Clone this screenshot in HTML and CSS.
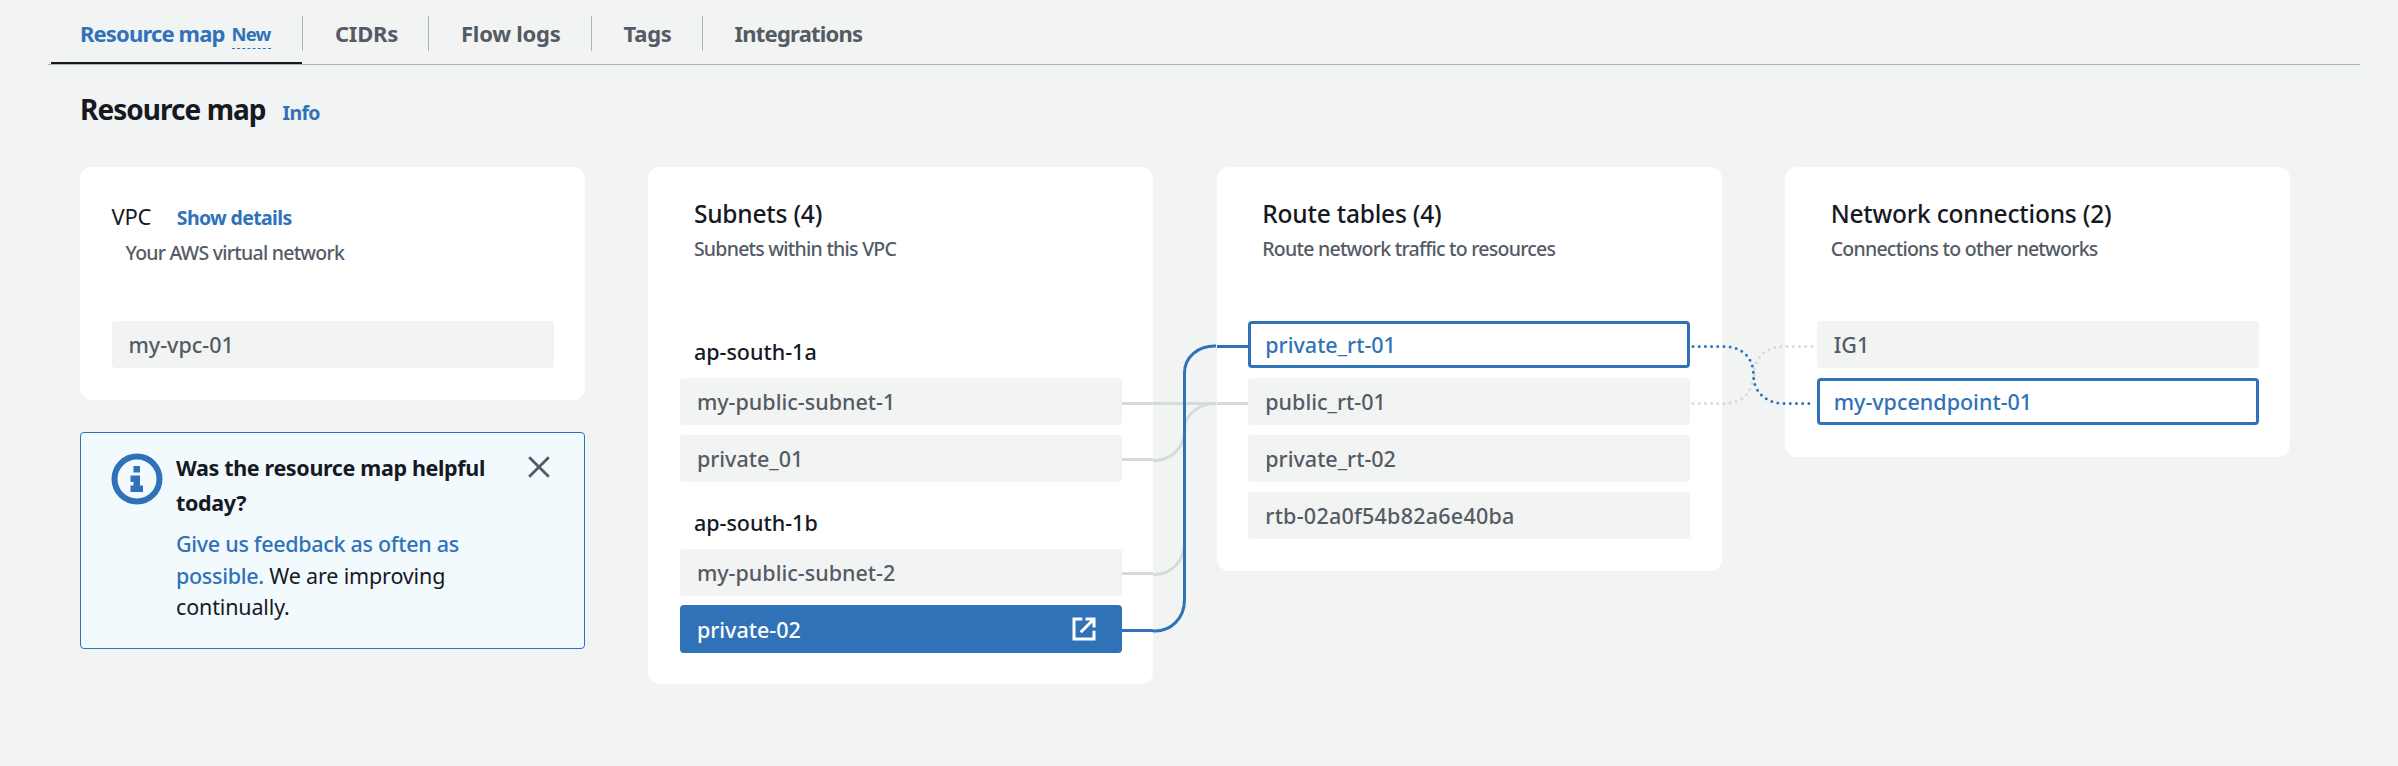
FILE: index.html
```html
<!DOCTYPE html>
<html lang="en">
<head>
<meta charset="utf-8">
<title>Resource map</title>
<link rel="stylesheet" href="styles.css">
</head>
<body>
<nav class="tabs">
  <a class="tab tab-active"><span>Resource map</span><span class="tag-new">New</span></a>
  <a class="tab">CIDRs</a>
  <a class="tab">Flow logs</a>
  <a class="tab">Tags</a>
  <a class="tab">Integrations</a>
</nav>
<header class="page-head">
  <h1>Resource map</h1>
  <a class="info">Info</a>
</header>
<main class="map">
  <div class="column">
    <section class="card">
      <div class="card-head card-head-vpc">
        <h2>VPC <a class="details">Show details</a></h2>
        <p>Your AWS virtual network</p>
      </div>
      <div class="node">my-vpc-01</div>
    </section>
    <aside class="feedback">
      <svg class="feedback-icon" width="52" height="52" viewBox="0 0 52 52">
        <circle cx="26" cy="26" r="22.5" fill="none" stroke="#3072b8" stroke-width="6"/>
        <path fill="#3072b8" d="M22.500 13h6.500v6.500h-6.500zM19.500 22.500h9.500v10h3v6.500h-12.500v-6.500h3v-3.500h-3z"/>
      </svg>
      <div class="feedback-text">
        <h3>Was the resource map helpful<br>today?</h3>
        <p><a>Give us feedback as often as<br>possible.</a> We are improving<br>continually.</p>
      </div>
      <svg class="close" width="22" height="22" viewBox="0 0 22 22"><path d="M1.2 1.2l19.6 19.6M20.8 1.2L1.2 20.8" stroke="#545b64" stroke-width="2.8"/></svg>
    </aside>
  </div>
  <section class="card">
    <div class="card-head">
      <h2>Subnets (4)</h2>
      <p>Subnets within this VPC</p>
    </div>
    <h3 class="zone">ap-south-1a</h3>
    <div class="node">my-public-subnet-1</div>
    <div class="node">private_01</div>
    <h3 class="zone">ap-south-1b</h3>
    <div class="node">my-public-subnet-2</div>
    <div class="node node-selected">private-02
      <svg width="24" height="24" viewBox="0 0 24 24" fill="none" stroke="#fff" stroke-width="3"><path d="M10.3 2H2v20h20v-8.300M13.500 2H22v8.500M22 2L8.700 15.300"/></svg>
    </div>
  </section>
  <section class="card">
    <div class="card-head">
      <h2>Route tables (4)</h2>
      <p>Route network traffic to resources</p>
    </div>
    <div class="node node-linked">private_rt-01</div>
    <div class="node">public_rt-01</div>
    <div class="node">private_rt-02</div>
    <div class="node node-id">rtb-02a0f54b82a6e40ba</div>
  </section>
  <section class="card">
    <div class="card-head">
      <h2>Network connections (2)</h2>
      <p>Connections to other networks</p>
    </div>
    <div class="node">IG1</div>
    <div class="node node-linked">my-vpcendpoint-01</div>
  </section>
  <svg class="links" width="2210" height="520" viewBox="80 167 2210 520" fill="none" stroke-width="3">
    <g stroke="#d5dbdb">
      <path d="M1122 403.500H1216M1217 403.500H1248"/>
      <path d="M1122 459.500H1153M1153 460.500C1171 461 1184.500 448 1184.500 430C1184.500 415 1198 403.500 1216 403.500"/>
      <path d="M1122 573.500H1153M1153 574.500C1171 575 1184.500 561 1184.500 543"/>
      <path d="M1754 375C1754 358 1766 346.500 1784 346.500H1814" stroke-dasharray="0 6.200" stroke-linecap="round"/>
      <path d="M1693 403.500H1724C1742 403.500 1753 392 1753.500 375" stroke-dasharray="0 6.200" stroke-linecap="round"/>
    </g>
    <g stroke="#3072b8">
      <path d="M1122 630.500H1153M1153 631C1171 632 1184.500 618 1184.500 600V373C1184.500 357 1198 345.500 1216 346M1217 346.500H1248"/>
      <path d="M1693 346.500H1724C1742 346.500 1753.500 358 1753.500 375C1753.500 392 1766 403.500 1784 403.500H1815" stroke-dasharray="0 6.200" stroke-linecap="round"/>
    </g>
  </svg>
</main>
</body>
</html>
```
FILE: styles.css
```css
* { box-sizing: border-box; }
body {
  margin: 0;
  background: #f2f3f3;
  color: #16191f;
  font: 21.5px/31px "Noto Sans", "Open Sans", sans-serif;
}
h1, h2, h3, p { margin: 0; font-weight: 400; }
a { color: #3072b8; }

.tabs {
  display: flex;
  margin: 0 38px 0 48px;
  height: 65px;
  padding: 16px 0 0 3px;
  border-bottom: 1px solid #aab7b8;
  font-size: 22px;
  font-weight: 700;
  letter-spacing: -0.25px;
}
.tab {
  position: relative;
  height: 35px;
  padding: 0 30px 0 32px;
  line-height: 35px;
  border-right: 1px solid #aab7b8;
  color: #545b64;
  white-space: nowrap;
}
.tab:last-child { border-right: 0; letter-spacing: -0.8px; }
.tab-active { display: flex; gap: 7px; width: 252px; padding: 0 0 0 29px; color: #3072b8; letter-spacing: -0.85px; }
.tab-active::after {
  content: "";
  position: absolute;
  left: 0;
  right: 0;
  bottom: -13px;
  height: 2px;
  background: #16191f;
}
.tag-new { height: 33px; font-size: 18.5px; line-height: 36px; border-bottom: 1px dashed #3072b8; }

.page-head { display: flex; align-items: baseline; gap: 17px; padding: 24px 80px 0; height: 102px; }
.page-head h1 { font-size: 28px; line-height: 40px; font-weight: 700; letter-spacing: -0.95px; }
.info { font-size: 19.5px; font-weight: 700; letter-spacing: -0.7px; }

.map {
  position: relative;
  display: grid;
  grid-template-columns: repeat(4, 505px);
  column-gap: 63.4px;
  align-items: start;
  padding-left: 80px;
}
.column { display: flex; flex-direction: column; gap: 32px; }
.card {
  display: flex;
  flex-direction: column;
  gap: 10px;
  padding: 32px 31.5px;
  border-radius: 12px;
  background: #fff;
}
.card-head { height: 112px; padding-left: 14px; }
.card-head h2 { font-size: 24.5px; line-height: 30px; font-weight: 500; letter-spacing: -0.2px; }
.card-head p { margin-top: 7px; font-size: 19.5px; line-height: 26px; font-weight: 500; letter-spacing: -0.75px; color: #545b64; }
.card-head-vpc { padding-left: 0; }
.card-head-vpc h2 { font-size: 22px; line-height: 34px; font-weight: 400; }
.card-head-vpc p { margin-top: 5px; padding-left: 14px; }
.details { margin-left: 20px; font-size: 19.5px; font-weight: 700; letter-spacing: -0.65px; }
.zone { height: 47px; padding: 15px 0 0 14px; font-size: 21.5px; line-height: 31px; font-weight: 500; }
.node {
  height: 47px;
  padding-left: 17px;
  border-radius: 4px;
  background: #f2f3f3;
  color: #545b64;
  font-weight: 500;
  line-height: 47px;
}
.node-id { letter-spacing: 0.25px; }
.node-linked { padding-left: 14px; border: 3px solid #3072b8; background: #fff; color: #3072b8; line-height: 41px; }
.node-selected {
  display: flex;
  align-items: center;
  justify-content: space-between;
  height: 48px;
  margin: -1px 0;
  padding-right: 26px;
  background: #3072b8;
  color: #fff;
}
.feedback {
  display: flex;
  height: 217px;
  padding: 19px 34px 0 30px;
  border: 1px solid #3072b8;
  border-radius: 4px;
  background: #f3fafe;
}
.feedback-icon { margin-top: 1px; }
.feedback-text { flex: 1; margin-top: -2px; padding-left: 13px; white-space: nowrap; }
.feedback h3 { font-size: 21.5px; line-height: 35px; font-weight: 700; letter-spacing: -0.35px; }
.feedback p { margin-top: 8px; line-height: 31.5px; letter-spacing: -0.15px; }
.feedback a { font-weight: 500; letter-spacing: -0.3px; }
.close { margin-top: 4px; }
.links { position: absolute; left: 80px; top: 0; }
```
